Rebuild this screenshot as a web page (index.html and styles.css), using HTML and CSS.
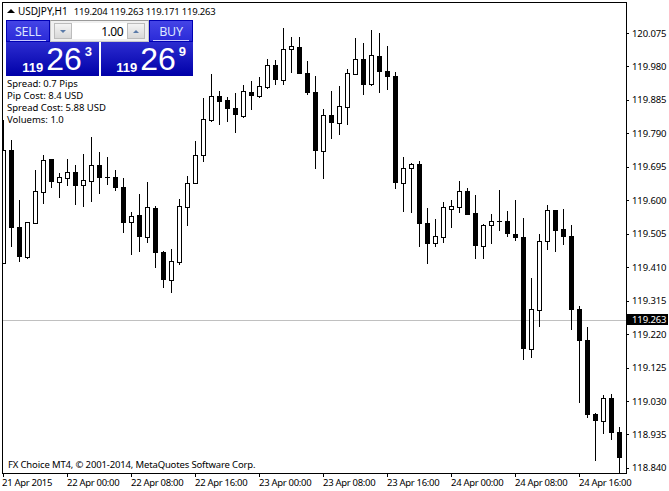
FILE: index.html
```html
<!DOCTYPE html>
<html lang="en">
<head>
<meta charset="utf-8">
<title>USDJPY,H1</title>
<link rel="stylesheet" href="styles.css">
</head>
<body>
<div class="terminal">
  <main class="chart">
    <svg class="candles" viewBox="3 3 623 470" width="623" height="470" aria-hidden="true">
      <line class="bid-line" x1="3" x2="626" y1="320.5" y2="320.5"/>
      <path class="wicks" d="M3.5 120V264M11.5 140V247M19.5 200V262M27.5 222V259M35.5 170V223M43.5 155V204M51.5 159V188M59.5 173V198M67.5 159V186M75.5 165V205M83.5 154V207M91.5 137V202M99.5 152V194M107.5 157V185M115.5 170V191M123.5 178V233M131.5 212V255M139.5 194V252M147.5 182V243M155.5 206V268M163.5 251V288M171.5 249V293M179.5 199V265M187.5 176V226M195.5 141V162M203.5 98V162M211.5 74V122M219.5 91V125M227.5 97V122M235.5 93V133M243.5 85V118M251.5 81V110M259.5 77V98M267.5 59V89M275.5 60V85M283.5 28V85M291.5 37V73M299.5 37V74M307.5 61V95M315.5 76V169M323.5 109V179M331.5 91V139M339.5 86V135M347.5 69V125M355.5 38V74M363.5 43V95M371.5 30V86M379.5 33V93M387.5 46V90M395.5 72V189M403.5 157V212M411.5 163V213M419.5 161V247M427.5 208V264M435.5 219V247M443.5 202V243M451.5 200V228M459.5 181V213M467.5 188V215M475.5 195V259M483.5 224V259M491.5 214V244M499.5 190V231M507.5 211V237M515.5 200V241M523.5 218V360M531.5 278V358M539.5 234V327M547.5 205V250M555.5 210V252M563.5 209V245M571.5 225V330M579.5 306V403M587.5 327V418M595.5 413V461M603.5 395V434M611.5 394V440M619.5 427V473"/>
      <path class="bear" d="M9 150h5v78h-5zM17 227h5v30h-5zM49 159h5v23h-5zM73 172h5v14h-5zM97 165h5v13h-5zM105 177h5v1h-5zM113 177h5v11h-5zM121 187h5v36h-5zM137 215h5v22h-5zM153 208h5v45h-5zM161 252h5v28h-5zM217 96h5v6h-5zM225 100h5v9h-5zM233 108h5v7h-5zM249 92h5v4h-5zM273 65h5v15h-5zM297 47h5v27h-5zM305 73h5v20h-5zM313 92h5v59h-5zM329 115h5v8h-5zM361 59h5v26h-5zM377 56h5v16h-5zM385 71h5v6h-5zM393 76h5v107h-5zM417 164h5v60h-5zM425 223h5v21h-5zM465 191h5v24h-5zM473 213h5v33h-5zM497 221h5v1h-5zM505 221h5v13h-5zM513 234h5v4h-5zM521 237h5v112h-5zM553 210h5v21h-5zM561 229h5v8h-5zM569 236h5v74h-5zM577 309h5v32h-5zM585 340h5v75h-5zM593 414h5v7h-5zM609 398h5v35h-5zM617 432h5v26h-5z"/>
      <path class="bull" d="M1.5 150.5h4v113h-4zM25.5 222.5h4v35h-4zM33.5 191.5h4v32h-4zM41.5 160.5h4v32h-4zM57.5 177.5h4v5h-4zM65.5 172.5h4v6h-4zM81.5 180.5h4v5h-4zM89.5 165.5h4v16h-4zM129.5 216.5h4v6h-4zM145.5 207.5h4v30h-4zM169.5 261.5h4v19h-4zM177.5 206.5h4v56h-4zM185.5 183.5h4v24h-4zM193.5 155.5h4v28h-4zM201.5 119.5h4v36h-4zM209.5 96.5h4v24h-4zM241.5 91.5h4v25h-4zM257.5 86.5h4v10h-4zM265.5 65.5h4v22h-4zM281.5 49.5h4v31h-4zM289.5 46.5h4v3h-4zM321.5 115.5h4v36h-4zM337.5 106.5h4v17h-4zM345.5 73.5h4v34h-4zM353.5 59.5h4v15h-4zM369.5 55.5h4v29h-4zM401.5 168.5h4v15h-4zM409.5 164.5h4v4h-4zM433.5 236.5h4v7h-4zM441.5 207.5h4v30h-4zM449.5 206.5h4v3h-4zM457.5 191.5h4v16h-4zM481.5 225.5h4v21h-4zM489.5 221.5h4v4h-4zM529.5 309.5h4v40h-4zM537.5 241.5h4v69h-4zM545.5 210.5h4v31h-4zM601.5 398.5h4v23h-4z"/>
    </svg>

    <header class="symbol-line">
      <span class="collapse-arrow"></span>
      <span class="symbol-name">USDJPY,H1</span>
      <span class="symbol-ohlc">119.204 119.263 119.171 119.263</span>
    </header>

    <section class="trade-panel">
      <div class="trade-top">
        <button class="side-btn">SELL</button>
        <div class="lot-box">
          <span class="spin spin-down"><i></i></span>
          <span class="lot-value">1.00</span>
          <span class="spin spin-up"><i></i></span>
        </div>
        <button class="side-btn">BUY</button>
      </div>
      <div class="trade-prices">
        <div class="price-cell"><span class="price-big-fig">119</span><span class="price-pips">26</span><span class="price-point">3</span></div>
        <div class="price-cell"><span class="price-big-fig">119</span><span class="price-pips">26</span><span class="price-point">9</span></div>
      </div>
    </section>

    <ul class="stats">
      <li>Spread: 0.7 Pips</li>
      <li>Pip Cost: 8.4 USD</li>
      <li>Spread Cost: 5.88 USD</li>
      <li>Voluems: 1.0</li>
    </ul>

    <footer class="copyright">FX Choice MT4, © 2001-2014, MetaQuotes Software Corp.</footer>
  </main>

  <aside class="price-axis">
    <div class="price-row">120.075</div>
    <div class="price-row">119.980</div>
    <div class="price-row">119.885</div>
    <div class="price-row">119.790</div>
    <div class="price-row">119.695</div>
    <div class="price-row">119.600</div>
    <div class="price-row">119.505</div>
    <div class="price-row">119.410</div>
    <div class="price-row">119.315</div>
    <div class="price-row">119.220</div>
    <div class="price-row">119.125</div>
    <div class="price-row">119.030</div>
    <div class="price-row">118.935</div>
    <div class="price-row">118.840</div>
    <div class="bid-tag">119.263</div>
  </aside>

  <nav class="time-axis">
    <div class="time-cell first">21 Apr 2015</div>
    <div class="time-cell">22 Apr 00:00</div>
    <div class="time-cell">22 Apr 08:00</div>
    <div class="time-cell">22 Apr 16:00</div>
    <div class="time-cell">23 Apr 00:00</div>
    <div class="time-cell">23 Apr 08:00</div>
    <div class="time-cell">23 Apr 16:00</div>
    <div class="time-cell">24 Apr 00:00</div>
    <div class="time-cell">24 Apr 08:00</div>
    <div class="time-cell">24 Apr 16:00</div>
  </nav>
</div>
</body>
</html>
```

FILE: styles.css
```css
* { box-sizing: border-box; margin: 0; padding: 0; }

html, body {
  width: 669px;
  height: 491px;
  overflow: hidden;
  background: #fff;
}

body {
  font-family: "Noto Sans", "DejaVu Sans", sans-serif;
  font-size: 9.5px;
  color: #000;
}

.terminal {
  width: 669px;
  height: 491px;
  padding: 2px 0 0 2px;
  display: grid;
  grid-template-columns: 625px 42px;
  grid-template-rows: 472px 17px;
}

.chart {
  position: relative;
  border: 1px solid #000;
  background: #fff;
}

.candles { position: absolute; left: 0; top: 0; display: block; shape-rendering: crispEdges; }
.bid-line { stroke: #c0c0c0; stroke-width: 1; }
.wicks { fill: none; stroke: #000; stroke-width: 1; }
.bear { fill: #000; }
.bull { fill: #fff; stroke: #000; stroke-width: 1; }

.symbol-line {
  position: absolute;
  left: 4px;
  top: 1px;
  height: 14px;
  display: flex;
  align-items: center;
  white-space: nowrap;
}
.collapse-arrow {
  width: 0;
  height: 0;
  border-left: 4px solid transparent;
  border-right: 4px solid transparent;
  border-bottom: 4px solid #000;
  margin-right: 3px;
}
.symbol-name { font-size: 10px; }
.symbol-ohlc { margin-left: 6px; letter-spacing: -0.2px; }

.trade-panel {
  position: absolute;
  left: 3px;
  top: 17px;
  width: 187px;
  color: #fff;
}
.trade-top { display: flex; height: 22px; }
.side-btn {
  width: 44px;
  height: 22px;
  border: 1px solid #0000b4;
  background: linear-gradient(#4444e6, #2a2ad8);
  color: #dde6ff;
  font: 12.5px "Noto Sans", sans-serif;
  letter-spacing: -0.2px;
  position: relative;
}
.side-btn::after {
  content: "";
  position: absolute;
  left: 3px;
  right: 3px;
  bottom: 0;
  height: 1px;
  background: #c8c8ff;
}
.lot-box {
  width: 99px;
  height: 22px;
  background: #f0f0f0;
  border: 1px solid #c8c8c8;
  border-top-color: #9a9a9a;
  padding: 2px 3px;
  display: flex;
  color: #000;
}
.spin {
  width: 18px;
  background: linear-gradient(#f4f4f4, #d8d8d8);
  border: 1px solid #bcbcbc;
  display: flex;
  align-items: center;
  justify-content: center;
}
.spin i { width: 0; height: 0; border-left: 3px solid transparent; border-right: 3px solid transparent; }
.spin-down i { border-top: 3px solid #5a7aa8; }
.spin-up i { border-bottom: 3px solid #5a7aa8; }
.lot-value {
  flex: 1;
  background: #fff;
  text-align: right;
  padding-right: 4px;
  font: 12px/18px "Noto Sans", sans-serif;
  letter-spacing: -0.5px;
}

.trade-prices { display: flex; gap: 2px; }
.price-cell {
  height: 34px;
  flex: 1;
  background: linear-gradient(#2c2cd0, #0000a8);
  display: flex;
  align-items: flex-end;
  justify-content: flex-end;
  padding-right: 7px;
  font-family: "Liberation Sans", sans-serif;
}
.price-cell:first-child { flex: 0 0 93px; padding-right: 7px; }
.price-big-fig { font-size: 13px; font-weight: 700; line-height: 15px; margin-right: 3px; padding-bottom: 1px; }
.price-pips { font-size: 32px; line-height: 34px; }
.price-point { font-size: 13px; font-weight: 700; line-height: 15px; align-self: flex-start; margin: 2px 0 0 3px; }

.stats {
  position: absolute;
  left: 4px;
  top: 75px;
  list-style: none;
  line-height: 12px;
}
.copyright {
  position: absolute;
  left: 5px;
  top: 456px;
  line-height: 12px;
  letter-spacing: -0.15px;
  white-space: nowrap;
}

.price-axis {
  position: relative;
  padding-top: 14.3px;
}
.price-row {
  height: 33.46px;
  display: flex;
  align-items: center;
  padding-left: 5px;
  position: relative;
  letter-spacing: -0.1px;
}
.price-row::before {
  content: "";
  position: absolute;
  left: 0;
  top: 50%;
  width: 2px;
  height: 1px;
  background: #000;
}
.bid-tag {
  position: absolute;
  left: 0;
  top: 312px;
  width: 41px;
  height: 11px;
  background: #000;
  color: #fff;
  line-height: 11px;
  padding-left: 5px;
  letter-spacing: -0.1px;
}

.time-axis {
  grid-column: 1 / 3;
  display: flex;
  padding-left: 1px;
  overflow: hidden;
}
.time-cell {
  flex: 0 0 64px;
  position: relative;
  line-height: 12px;
  padding-top: 3px;
  letter-spacing: -0.3px;
  white-space: nowrap;
}
.time-cell.first { text-indent: -1px; }
.time-cell::before {
  content: "";
  position: absolute;
  left: 0;
  top: 0;
  width: 1px;
  height: 3px;
  background: #000;
}
```
